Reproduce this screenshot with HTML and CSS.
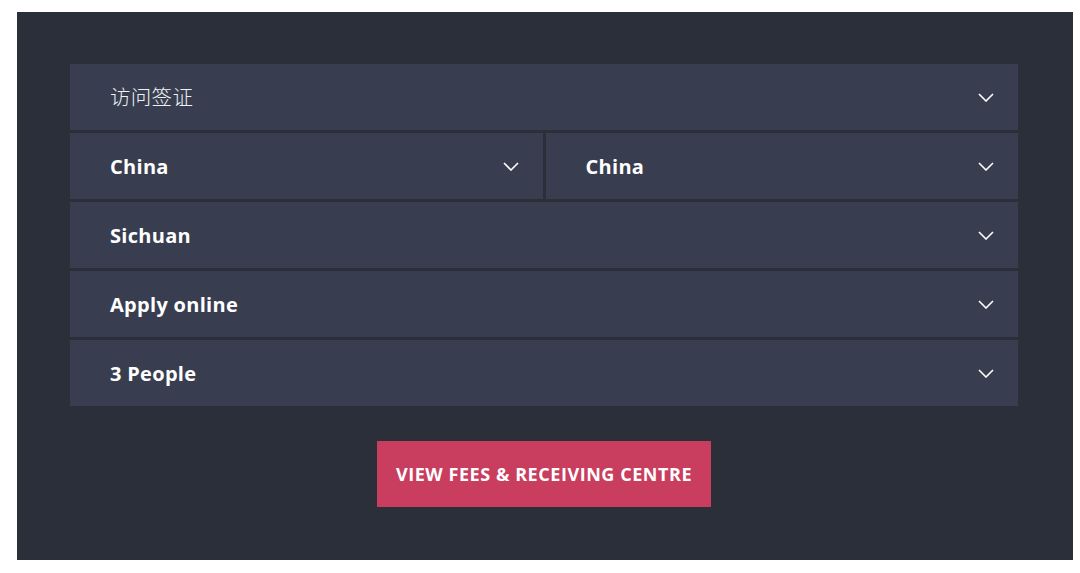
FILE: index.html
```html
<!DOCTYPE html>
<html lang="en">
<head>
<meta charset="utf-8">
<link rel="stylesheet" href="styles.css">
</head>
<body>
<div class="panel">
  <div class="rows">
    <div class="field">
      <span class="label cjk">访问签证</span>
      <svg class="chev" viewBox="0 0 16 9"><path d="M1 1l7 7 7-7" fill="none" stroke="#fff" stroke-width="1.6"/></svg>
    </div>
    <div class="split">
      <div class="field">
        <span class="label">China</span>
        <svg class="chev" viewBox="0 0 16 9"><path d="M1 1l7 7 7-7" fill="none" stroke="#fff" stroke-width="1.6"/></svg>
      </div>
      <div class="field">
        <span class="label">China</span>
        <svg class="chev" viewBox="0 0 16 9"><path d="M1 1l7 7 7-7" fill="none" stroke="#fff" stroke-width="1.6"/></svg>
      </div>
    </div>
    <div class="field">
      <span class="label">Sichuan</span>
      <svg class="chev" viewBox="0 0 16 9"><path d="M1 1l7 7 7-7" fill="none" stroke="#fff" stroke-width="1.6"/></svg>
    </div>
    <div class="field">
      <span class="label">Apply online</span>
      <svg class="chev" viewBox="0 0 16 9"><path d="M1 1l7 7 7-7" fill="none" stroke="#fff" stroke-width="1.6"/></svg>
    </div>
    <div class="field">
      <span class="label">3 People</span>
      <svg class="chev" viewBox="0 0 16 9"><path d="M1 1l7 7 7-7" fill="none" stroke="#fff" stroke-width="1.6"/></svg>
    </div>
  </div>
  <div class="actions">
    <button class="cta">VIEW FEES &amp; RECEIVING CENTRE</button>
  </div>
</div>
</body>
</html>
```
FILE: styles.css
```css
html, body {
  margin: 0;
  padding: 0;
  background: #ffffff;
}
body {
  font-family: "Open Sans", "Noto Sans CJK SC", sans-serif;
}
.panel {
  margin: 12px 0 0 17px;
  width: 1056px;
  height: 548px;
  box-sizing: border-box;
  padding: 52px 55px 0 53px;
  background: #2b2f3a;
}
.rows {
  display: flex;
  flex-direction: column;
  gap: 3px;
}
.split {
  display: flex;
  gap: 3px;
}
.split .field {
  flex: 1;
}
.field {
  height: 66px;
  box-sizing: border-box;
  padding: 0 24px 0 40px;
  display: flex;
  align-items: center;
  justify-content: space-between;
  background: #383e4f;
}
.label {
  color: #ffffff;
  font-size: 20px;
  font-weight: 700;
  letter-spacing: 0.3px;
}
.label.cjk {
  font-family: "Noto Sans CJK SC", sans-serif;
  font-weight: 300;
  font-size: 20.5px;
  letter-spacing: 0.3px;
  color: #eef0f4;
  position: relative;
  top: -1px;
}
.chev {
  width: 16px;
  height: 9px;
  display: block;
}
.actions {
  display: flex;
  justify-content: center;
  padding-top: 35px;
}
.cta {
  width: 334px;
  height: 66px;
  border: 0;
  background: #c93d5e;
  color: #ffffff;
  font-family: "Open Sans", sans-serif;
  font-weight: 700;
  font-size: 18px;
  letter-spacing: 0.55px;
  padding: 0;
}
```
